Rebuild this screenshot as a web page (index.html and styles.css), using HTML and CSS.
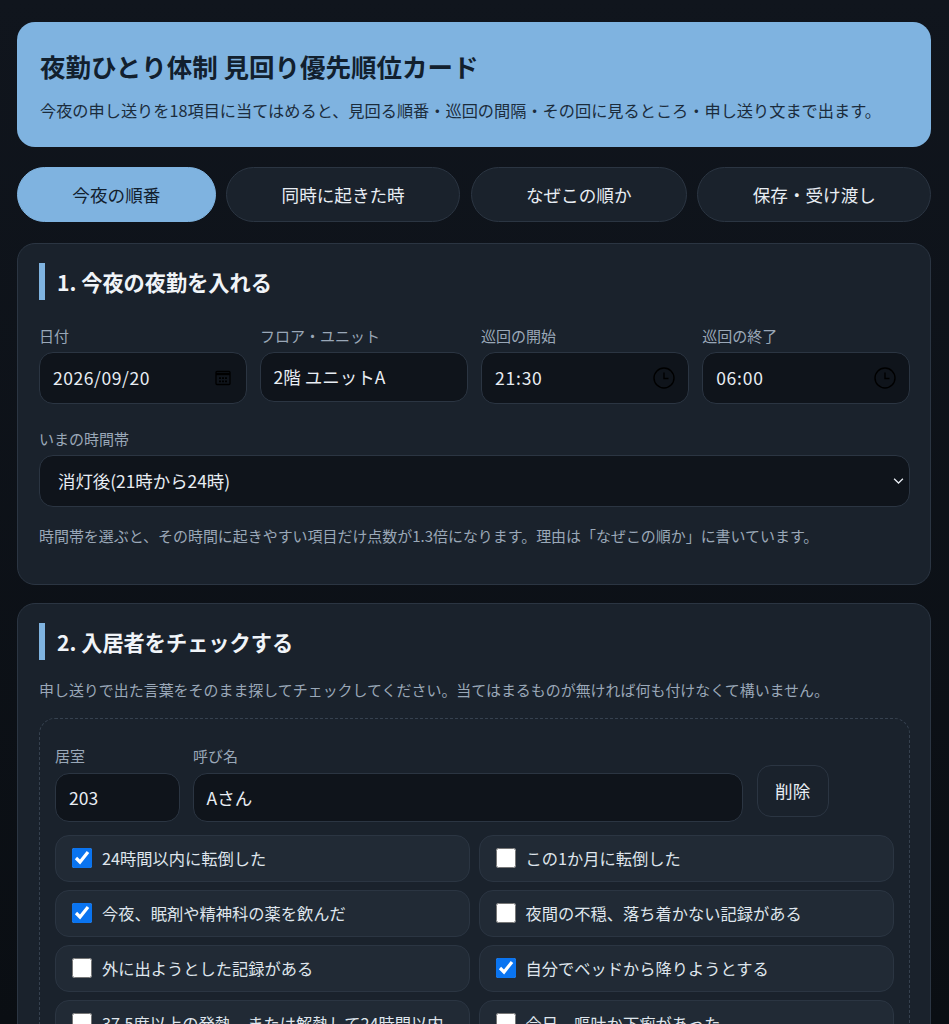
FILE: index.html
```html
<!DOCTYPE html>
<html lang="ja">
<head>
<meta charset="utf-8">
<title>夜勤ひとり体制 見回り優先順位カード</title>
<link rel="stylesheet" href="styles.css">
</head>
<body>
<div class="page">
  <header class="hero">
    <h1>夜勤ひとり体制 見回り優先順位カード</h1>
    <p>今夜の申し送りを18項目に当てはめると、見回る順番・巡回の間隔・その回に見るところ・申し送り文まで出ます。</p>
  </header>
  <nav class="tabs">
    <button class="tab active">今夜の順番</button>
    <button class="tab">同時に起きた時</button>
    <button class="tab">なぜこの順か</button>
    <button class="tab">保存・受け渡し</button>
  </nav>
  <section class="panel">
    <h2>1. 今夜の夜勤を入れる</h2>
    <div class="shift-grid">
      <div class="field">
        <label>日付</label>
        <div class="input tall"><span class="date-value">2026/09/20</span>
          <svg class="icon cal" viewBox="0 0 16 16"><path d="M2 1.5h12a1 1 0 0 1 1 1v11a1 1 0 0 1-1 1H2a1 1 0 0 1-1-1v-11a1 1 0 0 1 1-1z" fill="none" stroke="#000" stroke-width="1.3"/><path d="M1 3h14v2.2H1z" fill="#000"/><path d="M4 7.3h2v1.8H4zM7 7.3h2v1.8H7zM10 7.3h2v1.8h-2zM4 10.5h2v1.8H4zM7 10.5h2v1.8H7zM10 10.5h2v1.8h-2z" fill="#000"/></svg>
        </div>
      </div>
      <div class="field">
        <label>フロア・ユニット</label>
        <div class="input"><span>2階 ユニットA</span></div>
      </div>
      <div class="field">
        <label>巡回の開始</label>
        <div class="input tall"><span class="time-value">21:30</span>
          <svg class="icon clock" viewBox="0 0 22 22"><circle cx="11" cy="11" r="10" fill="none" stroke="#000" stroke-width="1.4"/><path d="M11 5.5V11.5H15.5" fill="none" stroke="#000" stroke-width="1.4"/></svg>
        </div>
      </div>
      <div class="field">
        <label>巡回の終了</label>
        <div class="input tall"><span class="time-value">06:00</span>
          <svg class="icon clock" viewBox="0 0 22 22"><circle cx="11" cy="11" r="10" fill="none" stroke="#000" stroke-width="1.4"/><path d="M11 5.5V11.5H15.5" fill="none" stroke="#000" stroke-width="1.4"/></svg>
        </div>
      </div>
    </div>
    <div class="field time-band">
      <label>いまの時間帯</label>
      <div class="input tall select"><span>消灯後(21時から24時)</span>
        <svg class="chevron" viewBox="0 0 12 8"><path d="M1.2 1.6L6 6.2 10.8 1.6" fill="none" stroke="#e8edf3" stroke-width="1.4"/></svg>
      </div>
    </div>
    <p class="note">時間帯を選ぶと、その時間に起きやすい項目だけ点数が1.3倍になります。理由は「なぜこの順か」に書いています。</p>
  </section>
  <section class="panel">
    <h2>2. 入居者をチェックする</h2>
    <p class="note intro">申し送りで出た言葉をそのまま探してチェックしてください。当てはまるものが無ければ何も付けなくて構いません。</p>
    <div class="resident">
      <div class="resident-head">
        <div class="field room">
          <label>居室</label>
          <div class="input"><span>203</span></div>
        </div>
        <div class="field name">
          <label>呼び名</label>
          <div class="input"><span>Aさん</span></div>
        </div>
        <button class="delete">削除</button>
      </div>
      <div class="checks">
        <label class="check"><input type="checkbox" checked><span>24時間以内に転倒した</span></label>
        <label class="check"><input type="checkbox"><span>この1か月に転倒した</span></label>
        <label class="check"><input type="checkbox" checked><span>今夜、眠剤や精神科の薬を飲んだ</span></label>
        <label class="check"><input type="checkbox"><span>夜間の不穏、落ち着かない記録がある</span></label>
        <label class="check"><input type="checkbox"><span>外に出ようとした記録がある</span></label>
        <label class="check"><input type="checkbox" checked><span>自分でベッドから降りようとする</span></label>
        <label class="check"><input type="checkbox"><span>37.5度以上の発熱、または解熱して24時間以内</span></label>
        <label class="check"><input type="checkbox"><span>今日、嘔吐か下痢があった</span></label>
      </div>
    </div>
  </section>
</div>
</body>
</html>
```
FILE: styles.css
```css
* { box-sizing: border-box; }
html, body { margin: 0; padding: 0; background: #0c1016; }
body {
  font-family: "Noto Sans CJK JP", "Noto Sans", sans-serif;
  color: #e8edf3;
}
.page {
  height: 1024px;
  overflow: hidden;
  padding: 22px 17.8px 0 17px;
  display: flex;
  flex-direction: column;
  background: linear-gradient(#10151d, #0a0e13);
}
.hero {
  flex: none;
  height: 125px;
  background: #7fb3e0;
  border-radius: 18px;
  padding: 26px 23px 0;
  color: #12202e;
}
.hero h1 { margin: 0; font-size: 25.5px; line-height: 36px; font-weight: 700; }
.hero p { margin: 14px 0 0; font-size: 16.2px; line-height: 24px; color: #1b2c3c; }
.tabs { flex: none; display: flex; gap: 10.5px; margin-top: 20px; }
.tab {
  flex: 1 1 auto;
  height: 55px;
  padding: 0 20px;
  font: 400 17.6px/1 "Noto Sans CJK JP", sans-serif;
  color: #e8edf3;
  background: #1a222c;
  border: 1px solid #2b3542;
  border-radius: 28px;
}
.tab.active { background: #7fb3e0; border-color: #7fb3e0; color: #12202e; }
.panel {
  flex: none;
  margin-top: 20.5px;
  background: #1a222c;
  border: 1px solid #2b3542;
  border-radius: 18px;
  padding: 19px 20.5px 0 21px;
}
.panel + .panel { margin-top: 18px; }
.panel:nth-of-type(1) { height: 342px; }
h2 {
  margin: 0;
  height: 37px;
  border-left: 6px solid #7fb3e0;
  padding-left: 12px;
  font-size: 21.2px;
  line-height: 37px;
  font-weight: 700;
  color: #f0f4f8;
}
.shift-grid { display: grid; grid-template-columns: repeat(4, 1fr); gap: 13.5px; margin-top: 25px; align-items: start; }
.field label { display: block; font-size: 15px; line-height: 22px; color: #9aa8b8; margin-bottom: 5px; }
.input {
  display: flex;
  align-items: center;
  justify-content: space-between;
  height: 50px;
  background: #0f141b;
  border: 1px solid #2b3542;
  border-radius: 14px;
  padding: 0 13px;
  font-size: 17.5px;
  color: #e8edf3;
}
.field:nth-child(2) .input { padding-left: 12.5px; }
.input.tall { height: 52px; }
.date-value { letter-spacing: .55px; }
.time-value { letter-spacing: .75px; }
.icon.cal { width: 16px; height: 16px; margin-right: 2px; }
.icon.clock { width: 22px; height: 22px; }
.time-band { margin-top: 24px; }
.select { padding: 0 5px 0 18px; font-size: 17.4px; }
.chevron { width: 11px; height: 8px; }
.note { margin: 18px 0 0; font-size: 14.96px; line-height: 22px; color: #9aa8b8; }
.intro { margin-top: 19px; }
.resident {
  margin-top: 17px;
  border: 1px dashed #36414f;
  border-radius: 16px;
  padding: 26px 15px 16px;
}
.resident-head { display: flex; gap: 13.5px; align-items: flex-start; padding-right: 65px; }
.resident-head label { margin-bottom: 6px; }
.room { flex: none; width: 124.5px; }
.name { flex: 1; }
.resident-head .input { height: 49px; }
.delete {
  flex: none;
  width: 72px;
  height: 52px;
  margin-top: 20px;
  font: 400 17.6px/1 "Noto Sans CJK JP", sans-serif;
  color: #e8edf3;
  background: #1a222c;
  border: 1px solid #2b3542;
  border-radius: 14px;
}
.checks { display: grid; grid-template-columns: 1fr 1fr; gap: 8.3px; margin-top: 13.5px; }
.check {
  display: flex;
  align-items: center;
  gap: 10px;
  height: 46.7px;
  padding: 0 16px;
  background: #212a35;
  border: 1px solid #2b3542;
  border-radius: 14px;
  font-size: 16.25px;
  color: #dfe5ec;
}
.check input { width: 20px; height: 20px; margin: 0; flex: none; accent-color: #0a74f0; }
```
